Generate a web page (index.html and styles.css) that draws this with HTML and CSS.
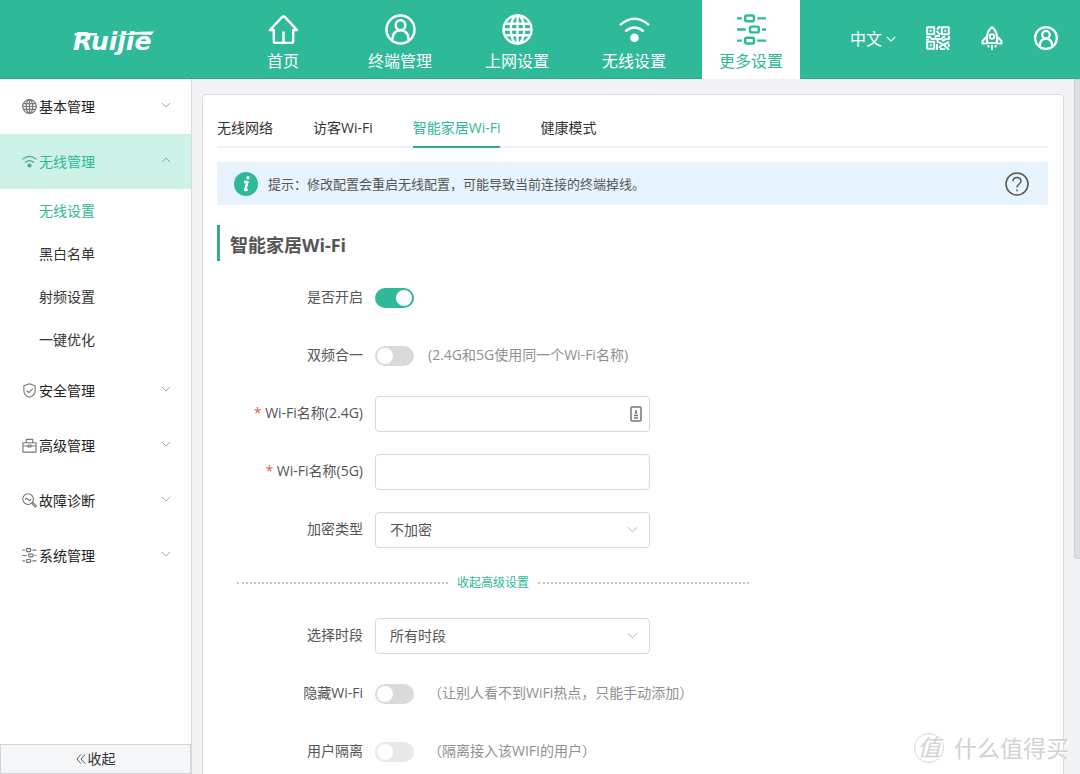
FILE: index.html
```html
<!DOCTYPE html>
<html lang="zh-CN">
<head>
<meta charset="utf-8">
<title>智能家居Wi-Fi</title>
<link rel="stylesheet" href="styles.css">
</head>
<body>
<svg class="sprite" aria-hidden="true">
  <symbol id="i-home" viewBox="0 0 32 32"><path d="M2 16.500 14.500 3.200q1.500-1.400 3 0L30 16.500H26V28q0 1.800-1.800 1.800H7.800Q6 29.800 6 28V16.500ZM16 18v11.500"/></symbol>
  <symbol id="i-user" viewBox="0 0 32 32"><circle cx="16" cy="16" r="14.500"/><circle cx="16" cy="11.500" r="5"/><path d="M7.500 27c.3-6.500 3.200-10.300 8.500-10.300s8.200 3.800 8.500 10.300"/></symbol>
  <symbol id="i-globe" viewBox="0 0 32 32"><circle cx="16" cy="16" r="14.500"/><ellipse cx="16" cy="16" rx="7" ry="14.500"/><path d="M3.500 10h25M1.500 16h29M3.500 22h25M16 1.500v29"/></symbol>
  <symbol id="i-wifi" viewBox="0 0 32 32"><path d="M1 11.500q15-13 30 0M6.500 18q9.500-8 19 0"/><circle class="dot" cx="16" cy="24.500" r="4.500"/></symbol>
  <symbol id="i-tune" viewBox="0 0 32 32"><path d="M1 4.500h5M22 4.500h9M1 16h9M27 16h4M1 27.500h5M22 27.500h9"/><rect x="9.500" y="1.500" width="9" height="6" rx="1.500"/><rect x="14.500" y="13" width="9" height="6" rx="1.500"/><rect x="9.500" y="24.500" width="9" height="6" rx="1.500"/></symbol>
  <symbol id="i-qr" viewBox="0 0 24 24"><path d="M1.200 1.200h7v7h-7zM15.800 1.200h7v7h-7zM1.200 15.800h7v7h-7zM3.700 4.700h2M18.300 4.700h2M3.700 19.300h2M14 0l-3 3.500M10.500 5l3.500 3.500M14 10h-4l-1 3H6M0 11h4l2 2.500M19 10l-4 3h-4l1 4M23 10v3h-3l-4 2M11 18v6M13 16l4 3 6-3M13 22l4-4M18 19l5 5M14 23.300h5M22.800 18v3M0 13.500h3"/></symbol>
  <symbol id="i-rocket" viewBox="0 0 24 24"><path d="M12 1C8.500 4 7 7.500 7 11v6h10v-6c0-3.500-1.500-7-5-10ZM7 10.500 2.500 15v2.500H7M17 10.500l4.500 4.500v2.500H17M8.500 19v2.500M12 19v5M15.500 19v2.500"/><circle cx="12" cy="10.500" r="2.300"/></symbol>
  <symbol id="i-down" viewBox="0 0 12 12"><path d="m1 3.500 5 5 5-5"/></symbol>
  <symbol id="i-up" viewBox="0 0 12 12"><path d="m1 8.500 5-5 5 5"/></symbol>
  <symbol id="i-shield" viewBox="0 0 16 16"><path d="M8 .8 2 3v5.500c0 3 2.200 5.200 6 6.800 3.800-1.600 6-3.800 6-6.800V3ZM5 8l2.300 2.300L11.500 6"/></symbol>
  <symbol id="i-case" viewBox="0 0 16 16"><path d="M1 5h14v10H1zM4.500 5V1.500h7V5M1 8.500h5.500M9.500 8.500H15M6.500 7.500h3v2h-3z"/></symbol>
  <symbol id="i-diag" viewBox="0 0 16 16"><circle cx="6.500" cy="6.500" r="5.700"/><path d="M3.500 7q1.500-2.500 3 0t3-.500M10.500 11l1-1 3.800 3.800-1.200 1.200Z"/></symbol>
  <symbol id="i-fold" viewBox="0 0 12 12"><path d="M6 .500 1 6l5 5.500M11 .500 6 6l5 5.500"/></symbol>
  <symbol id="i-info" viewBox="0 0 24 24"><circle class="disc" cx="12" cy="12" r="12"/><path class="mark" d="M10 10h3.500l-2.300 7.500q-.400 1.300 2.300-.300"/><circle class="knob" cx="14" cy="5.800" r="1.700"/></symbol>
  <symbol id="i-help" viewBox="0 0 24 24"><circle cx="12" cy="12" r="11"/><path d="M8 9.300c0-5 8-5 8-.3 0 3-4 3-4 6.500M12 17.500v1.800"/></symbol>
  <symbol id="i-card" viewBox="0 0 12 16"><rect x="1" y="1" width="10" height="14" rx="1"/><path d="M4 9.500h4M4 12h4M6 4v3M4.800 7h2.400"/></symbol>
</svg>

<header class="topbar">
  <a class="logo" href="#" aria-label="Ruijie">Ruijie<svg class="swoosh" viewBox="0 0 84 28" aria-hidden="true"><path d="M3 3h22v2.500H2ZM44 6.500Q58 1 82 1.500L79.500 5Q60 3.500 44 6.500Z"/></svg></a>
  <nav class="mainnav">
    <a href="#"><svg><use href="#i-home"/></svg>首页</a>
    <a href="#"><svg><use href="#i-user"/></svg>终端管理</a>
    <a href="#"><svg><use href="#i-globe"/></svg>上网设置</a>
    <a href="#"><svg><use href="#i-wifi"/></svg>无线设置</a>
    <a href="#" class="current"><svg><use href="#i-tune"/></svg>更多设置</a>
  </nav>
  <div class="tools">
    <button type="button" class="lang">中文<svg><use href="#i-down"/></svg></button>
    <button type="button" aria-label="二维码"><svg><use href="#i-qr"/></svg></button>
    <button type="button" aria-label="优化"><svg><use href="#i-rocket"/></svg></button>
    <button type="button" aria-label="账户"><svg class="account"><use href="#i-user"/></svg></button>
  </div>
</header>

<div class="shell">
  <aside class="sidebar">
    <nav class="menu">
      <a href="#"><svg class="ico big"><use href="#i-globe"/></svg>基本管理<svg class="arrow"><use href="#i-down"/></svg></a>
      <a href="#" class="open"><svg class="ico big"><use href="#i-wifi"/></svg>无线管理<svg class="arrow"><use href="#i-up"/></svg></a>
      <div class="submenu">
        <a href="#" class="current">无线设置</a>
        <a href="#">黑白名单</a>
        <a href="#">射频设置</a>
        <a href="#">一键优化</a>
      </div>
      <a href="#"><svg class="ico"><use href="#i-shield"/></svg>安全管理<svg class="arrow"><use href="#i-down"/></svg></a>
      <a href="#"><svg class="ico"><use href="#i-case"/></svg>高级管理<svg class="arrow"><use href="#i-down"/></svg></a>
      <a href="#"><svg class="ico"><use href="#i-diag"/></svg>故障诊断<svg class="arrow"><use href="#i-down"/></svg></a>
      <a href="#"><svg class="ico big"><use href="#i-tune"/></svg>系统管理<svg class="arrow"><use href="#i-down"/></svg></a>
    </nav>
    <button type="button" class="fold"><svg><use href="#i-fold"/></svg>收起</button>
  </aside>

  <main class="content">
    <section class="card">
      <nav class="tabs">
        <a href="#">无线网络</a>
        <a href="#">访客Wi-Fi</a>
        <a href="#" class="current">智能家居Wi-Fi</a>
        <a href="#">健康模式</a>
      </nav>
      <div class="notice">
        <svg class="info"><use href="#i-info"/></svg>
        <p>提示：修改配置会重启无线配置，可能导致当前连接的终端掉线。</p>
        <button type="button" aria-label="帮助"><svg><use href="#i-help"/></svg></button>
      </div>
      <h1>智能家居Wi-Fi</h1>
      <form class="form">
        <div class="row"><label for="enable">是否开启</label><input class="switch" type="checkbox" id="enable" checked></div>
        <div class="row"><label for="merge">双频合一</label><input class="switch" type="checkbox" id="merge"><span class="hint">(2.4G和5G使用同一个Wi-Fi名称)</span></div>
        <div class="row"><label for="n24"><b>*</b> Wi-Fi名称(2.4G)</label><div class="field"><input type="text" id="n24"><svg class="card-ico"><use href="#i-card"/></svg></div></div>
        <div class="row"><label for="n5"><b>*</b> Wi-Fi名称(5G)</label><div class="field"><input type="text" id="n5"></div></div>
        <div class="row"><label for="enc">加密类型</label><div class="field"><select id="enc"><option>不加密</option></select><svg class="caret"><use href="#i-down"/></svg></div></div>
        <div class="divider"><button type="button">收起高级设置</button></div>
        <div class="row"><label for="time">选择时段</label><div class="field"><select id="time"><option>所有时段</option></select><svg class="caret"><use href="#i-down"/></svg></div></div>
        <div class="row"><label for="hide">隐藏Wi-Fi</label><input class="switch" type="checkbox" id="hide"><span class="hint">（让别人看不到WiFi热点，只能手动添加）</span></div>
        <div class="row"><label for="iso">用户隔离</label><input class="switch" type="checkbox" id="iso" disabled><span class="hint">（隔离接入该WIFI的用户）</span></div>
      </form>
    </section>
    <div class="scrolltrack"><div class="thumb"></div></div>
  </main>
</div>
<div class="watermark"><span class="seal">值</span>什么值得买</div>
</body>
</html>
```

FILE: styles.css
```css
* { box-sizing: border-box; }

body {
  margin: 0;
  height: 100vh;
  display: flex;
  flex-direction: column;
  overflow: hidden;
  background: #f2f3f5;
  color: #333;
  font: 14px/20px "Open Sans", "Noto Sans CJK SC", sans-serif;
}

a { color: inherit; text-decoration: none; }
button { padding: 0; border: 0; background: none; color: inherit; font: inherit; cursor: pointer; }
svg { fill: none; stroke: currentColor; stroke-linejoin: round; flex: none; }
.sprite { position: absolute; width: 0; height: 0; }
.dot, .disc { fill: currentColor; stroke: none; }

/* Top bar */
.topbar {
  display: flex;
  flex: none;
  height: 79px;
  background: #2eb998;
  border-bottom: 1px solid #2aab8c;
  color: #fff;
}
.logo {
  position: relative;
  width: 234px;
  padding: 26px 0 0 73px;
  font: italic bold 25px/32px "DejaVu Sans", sans-serif;
}
.swoosh { position: absolute; left: 72px; top: 30px; width: 84px; height: 28px; fill: #fff; stroke: none; }
.mainnav { display: flex; gap: 19px; }
.mainnav a {
  width: 98px;
  display: flex;
  flex-direction: column;
  align-items: center;
  gap: 4px;
  padding-top: 14px;
  font-size: 16px;
  line-height: 24px;
}
.mainnav svg { width: 31px; height: 31px; stroke-width: 2.500; }
.mainnav .current { height: 79px; background: #fff; color: #2eb998; }
.tools { display: flex; align-items: center; margin-left: auto; padding: 0 22px 2px 0; gap: 30px; }
.tools button { display: flex; align-items: center; }
.tools svg { width: 24px; height: 24px; stroke-width: 2; }
.tools .account { stroke-width: 3; }
.tools .lang { font-size: 16px; gap: 4px; padding-top: 2px; }
.tools .lang svg { width: 10px; height: 12px; stroke-width: 1.500; }

/* Side menu */
.shell { flex: 1; display: flex; min-height: 0; }
.sidebar {
  width: 192px;
  flex: none;
  display: flex;
  flex-direction: column;
  background: #fff;
  border-right: 1px solid #d9dadd;
}
.menu { flex: 1; }
.menu > a { display: flex; align-items: center; height: 55px; padding: 0 20px 0 22px; gap: 2px; color: #222; }
.ico { width: 15px; height: 15px; color: #777; stroke-width: 1.200; }
.ico.big { stroke-width: 2.600; }
.arrow { width: 10px; height: 10px; margin: 0 0 4px auto; color: #999; }
.menu .open { background: #cdf2e8; color: #2eb998; }
.open .ico, .open .arrow { color: #4faa90; }
.submenu { padding: 0 0 2px; }
.submenu a { display: block; padding-left: 39px; line-height: 43px; }
.submenu .current { color: #2eb998; }
.fold {
  display: flex;
  align-items: center;
  justify-content: center;
  gap: 2px;
  height: 30px;
  background: #f5f6f8;
  border: 1px solid #d3d4d6;
}
.fold svg { width: 10px; height: 12px; }

/* Content */
.content { flex: 1; min-width: 0; display: flex; gap: 10px; padding-left: 10px; }
.card {
  flex: 1;
  min-width: 0;
  margin-top: 15px;
  padding: 15px 15px 0 14px;
  background: #fff;
  border: 1px solid #dcdde1;
  border-bottom: 0;
  border-radius: 4px 4px 0 0;
}
.scrolltrack { width: 6px; }
.thumb { height: 69%; background: #dedfe2; border: 1px solid #cfd0d4; border-right: 0; border-radius: 0 0 0 3px; }

.tabs { display: flex; gap: 40px; border-bottom: 2px solid #eff0f2; }
.tabs a { margin-bottom: -2px; padding: 8px 0; line-height: 20px; border-bottom: 2px solid transparent; }
.tabs .current { color: #2eb998; border-color: #35ab8b; }

.notice {
  display: flex;
  align-items: center;
  height: 43px;
  margin-top: 14px;
  padding: 0 19px 0 17px;
  background: #e7f3fd;
  font-size: 13px;
  color: #555;
}
.notice p { flex: 1; margin: 0 0 0 10px; }
.notice svg { display: block; width: 24px; height: 24px; stroke-width: 1.500; }
.info { color: #2eb998; }
.mark { stroke: #fff; stroke-width: 2.500; }
.knob { fill: #fff; stroke: none; }

h1 {
  margin: 20px 0 19px;
  padding-left: 10px;
  border-left: 3px solid #35ab8b;
  font-size: 18px;
  line-height: 36px;
  height: 36px;
  padding-top: 2px;
  color: #555;
}

.form { display: flex; flex-direction: column; gap: 22px; }
.row { display: flex; align-items: center; height: 36px; color: #555; }
.row label { width: 146px; margin-right: 12px; padding-bottom: 2px; text-align: right; white-space: nowrap; }
.row label b { color: #e8603c; font-weight: normal; }
.hint { margin-left: 14px; padding-bottom: 2px; color: #909090; }
.field { position: relative; width: 275px; }
.field input, .field select {
  display: block;
  width: 100%;
  height: 36px;
  padding: 0 14px;
  border: 1px solid #d8d8d8;
  border-radius: 4px;
  background: #fff;
  color: #555;
  font: inherit;
  appearance: none;
}
.caret { position: absolute; right: 12px; top: 12px; width: 11px; height: 11px; color: #aaa; pointer-events: none; }
.card-ico { position: absolute; right: 8px; top: 10px; width: 12px; height: 16px; stroke-width: 1.500; color: #777; }

.switch {
  appearance: none;
  display: flex;
  width: 39px;
  height: 20px;
  margin: 0;
  padding: 2px;
  border-radius: 10px;
  background: #dadada;
}
.switch::before { content: ""; width: 16px; height: 16px; border-radius: 50%; background: #fff; }
.switch:checked { justify-content: flex-end; background: #2eb998; }
.switch:disabled { background: #e8e8e8; }

.divider { display: flex; align-items: center; width: 512px; height: 26px; margin-left: 20px; gap: 9px; color: #2eb998; font-size: 12px; }
.divider::before, .divider::after { content: ""; flex: 1; border-top: 2px dotted #c4c4c4; }

.watermark {
  position: absolute;
  right: 11px;
  bottom: 10px;
  display: flex;
  align-items: center;
  gap: 10px;
  color: #d2d2d2;
  font-size: 23px;
  line-height: 32px;
  text-shadow: 1px 1px 0 #fff;
}
.seal { width: 30px; height: 30px; border: 1px solid #d6d6d6; border-radius: 50%; line-height: 26px; text-align: center; font-style: italic; }
```
